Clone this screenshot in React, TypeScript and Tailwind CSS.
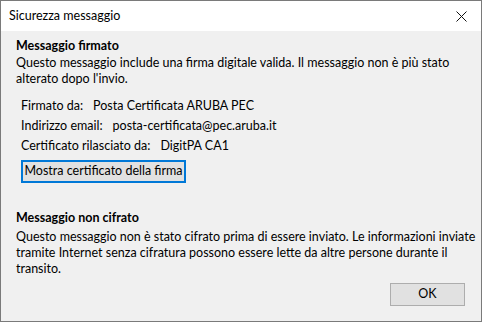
import React from "react";

export default function App() {
  const font = { fontFamily: 'Lato, "Noto Sans", sans-serif' };
  return (
    <div
      className="w-[482px] h-[322px] border border-[#7a7a7a] bg-[#f0f0f0] flex flex-col text-[12.5px] text-black overflow-hidden whitespace-nowrap"
      style={font}
    >
      <div className="h-[30px] bg-white flex items-center justify-between pl-[8px] pr-[12px] shrink-0">
        <span>Sicurezza messaggio</span>
        <svg width="11" height="11" viewBox="0 0 11 11" className="mr-[2px]">
          <path d="M0.5 0.5 L10.5 10.5 M10.5 0.5 L0.5 10.5" stroke="#111" strokeWidth="1" />
        </svg>
      </div>
      <div className="flex flex-col flex-1 pl-[15px] pr-[15px] pt-[7px]">
        <div className="font-bold leading-[16px]">Messaggio firmato</div>
        <div className="leading-[16px] mt-[1px]">
          Questo messaggio include una firma digitale valida. Il messaggio non è più stato
          <br />
          alterato dopo l'invio.
        </div>
        <div className="flex flex-col pl-[5px] mt-[11px] gap-[4px] leading-[16px]">
          <div className="flex gap-[10px]">
            <span>Firmato da:</span>
            <span>Posta Certificata ARUBA PEC</span>
          </div>
          <div className="flex gap-[10px]">
            <span>Indirizzo email:</span>
            <span>posta-certificata@pec.aruba.it</span>
          </div>
          <div className="flex gap-[10px]">
            <span>Certificato rilasciato da:</span>
            <span>DigitPA CA1</span>
          </div>
          <div className="mt-[2px]">
            <button className="h-[23px] w-[165px] border-2 border-[#0078d7] bg-[#e1e1e1] flex items-center justify-center leading-none">
              Mostra certificato della firma
            </button>
          </div>
        </div>
        <div className="font-bold leading-[16px] mt-[27px]">Messaggio non cifrato</div>
        <div className="leading-[16px] mt-[3px]">
          Questo messaggio non è stato cifrato prima di essere inviato. Le informazioni inviate
          <br />
          tramite Internet senza cifratura possono essere lette da altre persone durante il
          <br />
          transito.
        </div>
        <div className="flex justify-end mt-[6px] pr-[1px]">
          <button className="w-[75px] h-[23px] border border-[#adadad] bg-[#e1e1e1] flex items-center justify-center leading-none">
            OK
          </button>
        </div>
      </div>
    </div>
  );
}
